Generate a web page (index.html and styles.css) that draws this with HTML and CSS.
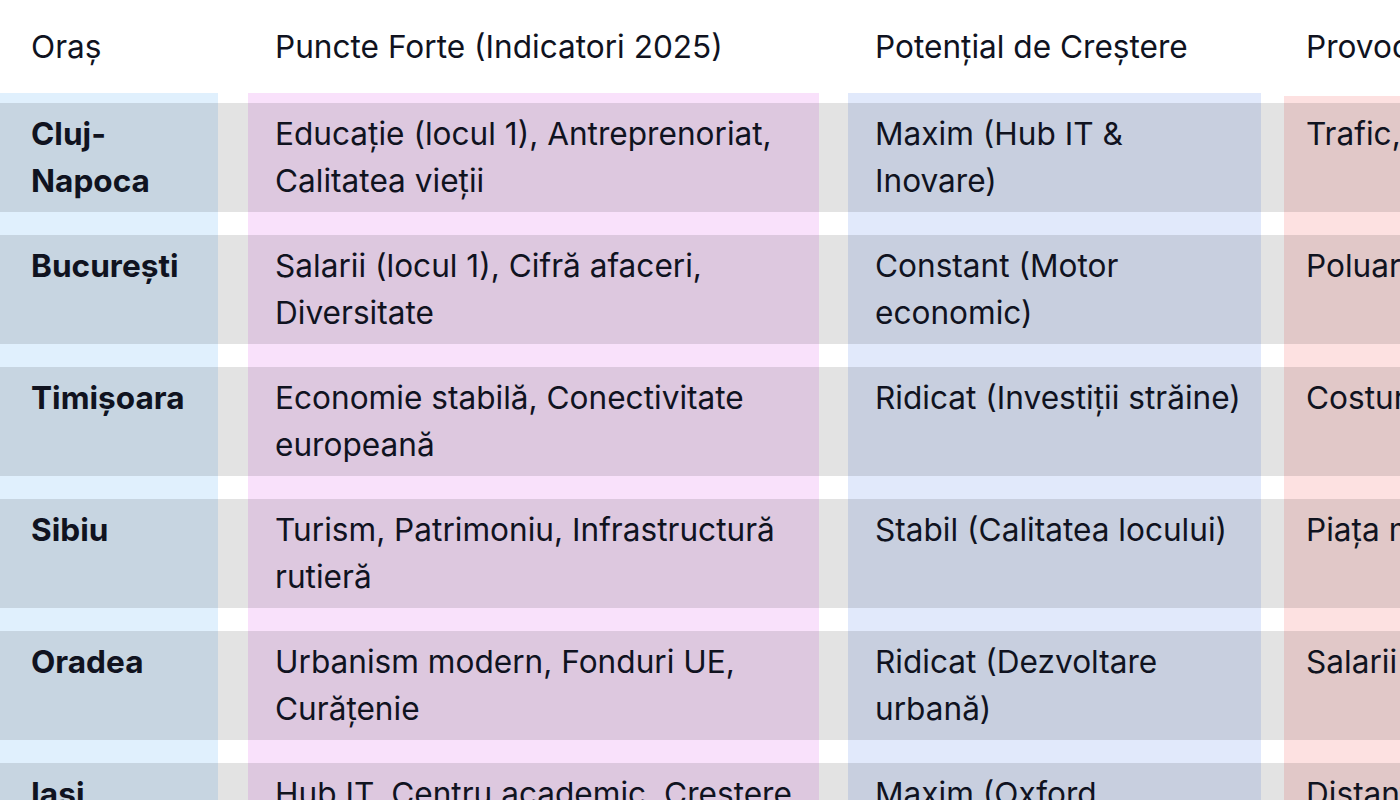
FILE: index.html
```html
<!DOCTYPE html>
<html lang="ro">
<head>
<meta charset="utf-8">
<title>Orașe</title>
<link rel="stylesheet" href="styles.css">
</head>
<body>
<div class="table">
  <div class="head">
    <div class="cell c1">Oraș</div>
    <div class="cell c2">Puncte Forte (Indicatori 2025)</div>
    <div class="cell c3">Potențial de Creștere</div>
    <div class="cell c4">Provocări Principale</div>
  </div>
  <div class="body">
    <div class="row">
      <div class="cell c1 city">Cluj-Napoca</div>
      <div class="cell c2">Educație (locul 1), Antreprenoriat, Calitatea vieții</div>
      <div class="cell c3">Maxim (Hub IT &amp; Inovare)</div>
      <div class="cell c4">Trafic, prețurile locuințelor</div>
    </div>
    <div class="row">
      <div class="cell c1 city">București</div>
      <div class="cell c2">Salarii (locul 1), Cifră afaceri, Diversitate</div>
      <div class="cell c3">Constant (Motor economic)</div>
      <div class="cell c4">Poluare, aglomerație</div>
    </div>
    <div class="row">
      <div class="cell c1 city">Timișoara</div>
      <div class="cell c2">Economie stabilă, Conectivitate europeană</div>
      <div class="cell c3">Ridicat (Investiții străine)</div>
      <div class="cell c4">Costuri în creștere</div>
    </div>
    <div class="row">
      <div class="cell c1 city">Sibiu</div>
      <div class="cell c2">Turism, Patrimoniu, Infrastructură rutieră</div>
      <div class="cell c3">Stabil (Calitatea locului)</div>
      <div class="cell c4">Piața muncii limitată</div>
    </div>
    <div class="row">
      <div class="cell c1 city">Oradea</div>
      <div class="cell c2">Urbanism modern, Fonduri UE, Curățenie</div>
      <div class="cell c3">Ridicat (Dezvoltare urbană)</div>
      <div class="cell c4">Salarii sub medie</div>
    </div>
    <div class="row">
      <div class="cell c1 city">Iași</div>
      <div class="cell c2">Hub IT, Centru academic, Creștere demografică</div>
      <div class="cell c3">Maxim (Oxford universitar)</div>
      <div class="cell c4">Distanța față de Vest</div>
    </div>
  </div>
</div>
</body>
</html>
```

FILE: styles.css
```css
html, body {
  margin: 0;
  padding: 0;
  overflow: hidden;
  background: #ffffff;
}

body {
  font-family: Inter, "Noto Sans", "Liberation Sans", sans-serif;
  font-size: 31.6px;
  line-height: 47px;
  color: #10131f;
}

.table {
  width: 1760px;
}

.head {
  display: flex;
  height: 93px;
  align-items: center;
}

.body {
  display: flex;
  flex-direction: column;
  gap: 23px;
  padding-top: 10px;
  background:
    linear-gradient(#ffffff, #ffffff) 1284px 0 / 100% 3px no-repeat,
    linear-gradient(to right,
      #e0f0fd 0 218px,
      #ffffff 218px 248px,
      #f9e1fb 248px 819px,
      #ffffff 819px 848px,
      #e1e9fb 848px 1261px,
      #ffffff 1261px 1284px,
      #fde1e1 1284px 100%);
}

.row {
  display: flex;
  background: rgba(0, 0, 0, 0.11);
  padding: 7px 0 8px;
}

.cell {
  box-sizing: border-box;
  flex: none;
}

.c1 {
  width: 218px;
  padding: 0 18px 0 31px;
}

.c2 {
  width: 571px;
  margin-left: 30px;
  padding: 0 16px 0 27px;
}

.c3 {
  width: 413px;
  margin-left: 29px;
  padding: 0 16px 0 27px;
}

.c4 {
  width: 440px;
  margin-left: 23px;
  padding: 0 20px 0 22px;
}

.city {
  font-weight: 700;
}
```
